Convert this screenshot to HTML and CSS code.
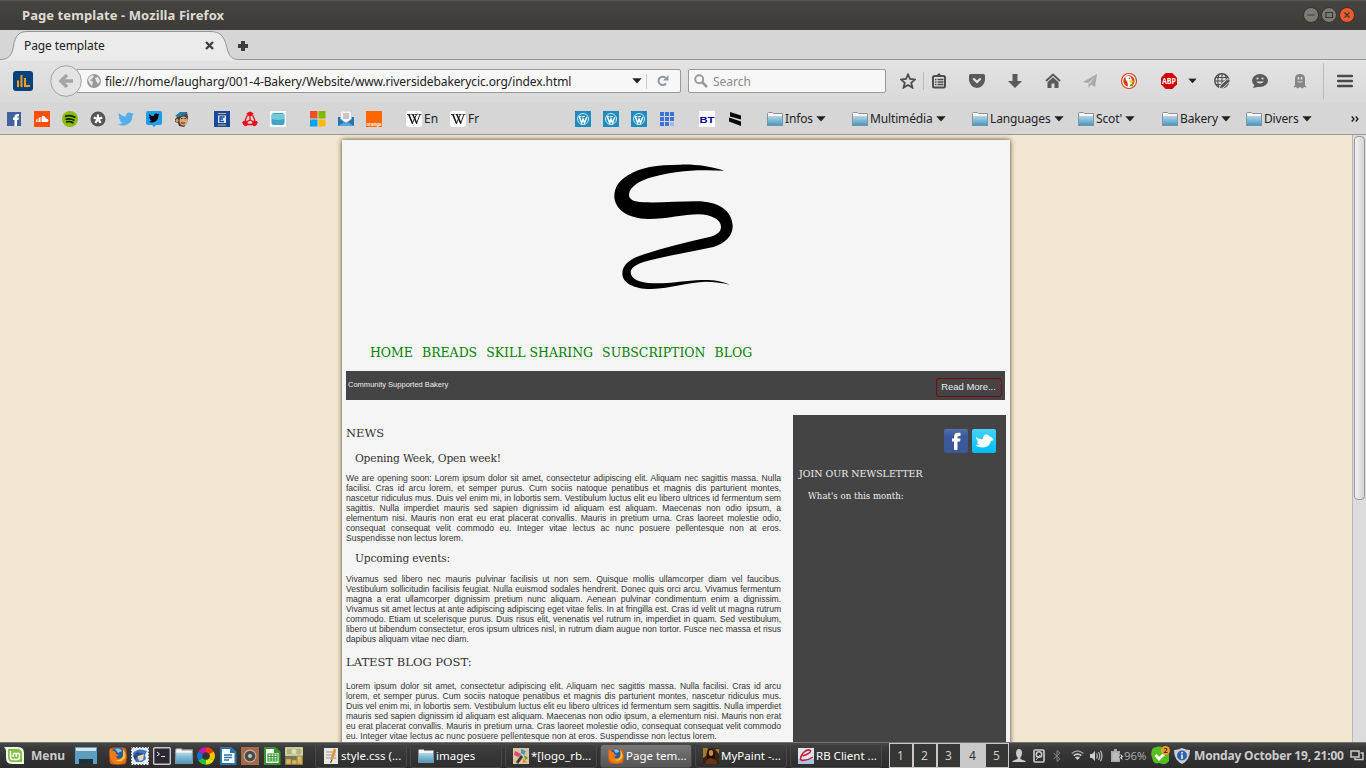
FILE: index.html
```html
<!DOCTYPE html>
<html lang="en">
<head>
<meta charset="utf-8">
<title>Page template</title>
<link rel="stylesheet" href="styles.css">
</head>
<body>
<svg class="defs" width="0" height="0">
  <defs>
    <linearGradient id="blue" x2="0" y2="1"><stop stop-color="#b5d6e5"/><stop offset="1" stop-color="#3f94bd"/></linearGradient>
    <linearGradient id="fbg" x2="0" y2="1"><stop stop-color="#5470ad"/><stop offset=".3" stop-color="#3b5998"/><stop offset="1" stop-color="#3b5998"/></linearGradient>
    <linearGradient id="twg" x2="0" y2="1"><stop stop-color="#44d2fc"/><stop offset="1" stop-color="#00bdfa"/></linearGradient>
    <symbol id="folder" viewBox="0 0 16 16"><path d="M.5 14.500V2.500Q.5 1.500 1.500 1.500H5.500L6.500 2.500H15.500V14.500Z" fill="#f5f5f5" stroke="#929292"/><path d="M0 5H16V15H0Z" fill="url(#blue)"/><path d="M.5 5V14.500H15.500V5" fill="none" stroke="#7895a3"/></symbol>
    <symbol id="caret" viewBox="0 0 10 6"><path d="M.3 .3H9.700L5 5.500Z" fill="#222"/></symbol>
    <symbol id="bird" viewBox="0 0 24 24"><path d="M24 4.600a10 10 0 0 1-2.800.8 5 5 0 0 0 2.200-2.700 10 10 0 0 1-3.100 1.200A4.900 4.900 0 0 0 11.900 8.300 14 14 0 0 1 1.700 3.100a4.900 4.900 0 0 0 1.500 6.600 5 5 0 0 1-2.200-.6 4.900 4.900 0 0 0 3.900 4.900 5 5 0 0 1-2.200.1 4.900 4.900 0 0 0 4.600 3.400A10 10 0 0 1 0 19.500 14 14 0 0 0 21.500 7a10 10 0 0 0 2.500-2.400Z"/></symbol>
    <symbol id="wp" viewBox="0 0 16 16"><path d="M0 0H16V16H0Z" fill="#1e8cbe"/><circle cx="8" cy="8" r="5.500" fill="none" stroke="#dcf0f8" stroke-width=".9"/><path d="M4.200 5.500L6.700 12L8 8L9.500 12L11.800 6" fill="none" stroke="#fff" stroke-width="1.500"/><path d="M3.800 5.500H6.500M7.200 5.500H10" stroke="#fff" stroke-width=".9"/></symbol>
    <symbol id="wiki" viewBox="0 0 16 16"><rect width="16" height="16" rx="3" fill="#fff"/><path d="M2.500 3.500L6.300 12.500L10.500 3.500M6.500 3.500L10.500 12.500L14 3.500" fill="none" stroke="#111" stroke-width=".9"/><path d="M3 3.500L6.700 12.500M7 3.500L11 12.500" stroke="#111" stroke-width="1.200"/><path d="M1 3.500H4.500M5.500 3.500H8.500M9 3.500H11.500M12.500 3.500H15.500" stroke="#111" stroke-width=".8"/></symbol>
    <symbol id="firefox" viewBox="0 0 18 18"><rect x=".5" y=".5" width="17" height="17" rx="4" fill="#d95b13"/><circle cx="9" cy="7" r="6.500" fill="#235c9f"/><path d="M6 2Q11 0 13 4L9 6Z" fill="#7dc2ea"/><path d="M1 1L4 4Q7 4 7 7L10 8L7 10Q8 13 13 11Q16 8 14 3Q19 7 17 12Q13 19 6 17Q-1 14 1 1Z" fill="#ef7b17"/><path d="M14 2Q18 8 15 12Q11 16 6 13Q12 14 14 9Z" fill="#fbc635"/></symbol>
    <symbol id="loaf" viewBox="0 0 18 18"><path d="M2 1H12L16.500 5V17H2Z" fill="#fff" stroke="currentColor" stroke-width="2"/><path d="M11 0L17 6H11Z" fill="currentColor"/></symbol>
  </defs>
</svg>

<header class="titlebar">
  <span class="titlebar-text">Page template - Mozilla Firefox</span>
  <svg class="winbtns" width="54" height="18" viewBox="0 0 54 18">
    <circle cx="9" cy="9" r="7.500" fill="#7b7a73" stroke="#34332f"/><circle cx="27" cy="9" r="7.500" fill="#7b7a73" stroke="#34332f"/><circle cx="45" cy="9" r="7.500" fill="#ee5a2e" stroke="#34332f"/>
    <path d="M5.500 9H12.500M24 6.500H30.500V11.500H24ZM42.500 6.500L47.500 11.500M47.500 6.500L42.500 11.500" fill="none" stroke="#3a3934" stroke-width="1.200"/>
  </svg>
</header>

<div class="tabstrip">
  <div class="tab">
    <svg class="tab-shape" width="238" height="30" viewBox="0 0 238 30"><path d="M0 29.500C9 29.500 12 25 13.500 16C15 6 19 1.500 27 1.500H210C220 1.500 224 6 226.500 16C228.500 25 231 29.500 238 29.500V30H0Z" fill="#ebebeb"/><path d="M0 29.500C9 29.500 12 25 13.500 16C15 6 19 1.500 27 1.500H210C220 1.500 224 6 226.500 16C228.500 25 231 29.500 238 29.500" fill="none" stroke="#8e959d"/></svg>
    <span class="tab-text">Page template</span>
    <svg class="tab-close" width="9" height="9" viewBox="0 0 9 9"><path d="M1 1L8 8M8 1L1 8" stroke="#3e3e3e" stroke-width="2.300"/></svg>
  </div>
  <svg class="tab-new" width="10" height="10" viewBox="0 0 10 10"><path d="M3 0H7V3H10V7H7V10H3V7H0V3H3Z" fill="#3d3d3d"/></svg>
</div>

<nav class="toolbar">
  <svg class="stats" width="20" height="20" viewBox="0 0 20 20"><rect width="20" height="20" rx="3" fill="#00437c"/><path d="M5 9.500V16M8.500 4V16M12 7V16M13 15H17" stroke="#ff9a1e" stroke-width="2"/></svg>
  <svg class="back" width="32" height="32" viewBox="0 0 32 32"><circle cx="16" cy="16" r="15.300" fill="#e3e3e3" stroke="#9da3a9"/><path d="M17 10L11 16L17 22M11.500 16H23" fill="none" stroke="#a5a5a5" stroke-width="3.600"/></svg>
  <div class="urlbar">
    <svg class="globe" width="14" height="14" viewBox="0 0 14 14"><circle cx="7" cy="7" r="7" fill="#999"/><path d="M2 3L5 1L7 2L5 5L3 6L6 8L5 12L3 10L1 6ZM8 4L11 3L13 7L11 10L9 7Z" fill="#e8e8e8"/></svg>
    <span class="url">file:///home/laugharg/001-4-Bakery/Website/www.riversidebakerycic.org/index.html</span>
    <svg class="urlcaret" width="10" height="6"><use href="#caret"/></svg>
    <i class="urlsep"></i>
    <svg class="reload" width="12" height="12" viewBox="0 0 12 12"><path d="M9 8.500A4.200 4.200 0 1 1 8.500 2.700" fill="none" stroke="#8c97a3" stroke-width="2"/><path d="M11.500 0V5.500H6Z" fill="#8c97a3"/></svg>
  </div>
  <div class="searchbar">
    <svg width="14" height="14" viewBox="0 0 14 14"><circle cx="5.200" cy="5.200" r="4" fill="none" stroke="#999" stroke-width="1.900"/><path d="M8 8L13 13" stroke="#999" stroke-width="2.500"/></svg>
    <span class="search-text">Search</span>
  </div>
  <svg class="t-star" width="16" height="16" viewBox="0 0 16 16"><path d="M8 1.500L10 6L15 6.500L11.200 9.800L12.400 14.600L8 12L3.600 14.600L4.800 9.800L1 6.500L6 6Z" fill="none" stroke="#4d4d4d" stroke-width="1.800"/></svg>
  <i class="sep sep-a"></i>
  <svg class="t-list" width="14" height="16" viewBox="0 0 14 16"><rect x="1" y="3" width="12" height="11.500" rx="1.500" fill="none" stroke="#4d4d4d" stroke-width="2"/><path d="M4 3L7 0L10 3Z" fill="#4d4d4d"/><path d="M3 6.500H4.500M5.500 6.500H11.500M3 9H4.500M5.500 9H11.500M3 11.500H4.500M5.500 11.500H11.500" stroke="#4d4d4d" stroke-width="1.400"/></svg>
  <svg class="t-pocket" width="16" height="16" viewBox="0 0 16 16"><path d="M1.500 1H14.500Q16 1 16 2.500V7Q15 14 8 15Q1 14 0 7V2.500Q0 1 1.500 1Z" fill="#5a5a5a"/><path d="M4.300 5.500L8 9L11.700 5.500" fill="none" stroke="#e6e6e6" stroke-width="2.200"/></svg>
  <svg class="t-down" width="14" height="16" viewBox="0 0 14 16"><path d="M4.500 1H9.500V8H14L7 15L0 8H4.500Z" fill="#5a5a5a"/></svg>
  <svg class="t-home" width="16" height="16" viewBox="0 0 16 16"><path d="M1 8L8 1.500L15 8" fill="none" stroke="#5a5a5a" stroke-width="2"/><path d="M2.500 9.300L8 4.300L13.500 9.300V15H9.500V10.500H6.500V15H2.500Z" fill="#5a5a5a"/></svg>
  <svg class="t-plane" width="14" height="15" viewBox="0 0 14 15"><path d="M14 0L12 13L8 10.500L5.500 14V9L0 8Z" fill="#a9a9a9"/><path d="M13 1.500L5.500 9L6.500 10Z" fill="#ddd"/></svg>
  <svg class="t-duck" width="16" height="16" viewBox="0 0 16 16"><circle cx="8" cy="8" r="8" fill="#dc3b14"/><circle cx="8" cy="8" r="6.300" fill="none" stroke="#fff" stroke-width="1.200"/><path d="M4 3.500L8 3Q11 4 11 8L11.500 13L7 14Q7 9 5 7Z" fill="#fff"/><path d="M8.500 7L14 8L9.500 10.500Z" fill="#f9c513"/><circle cx="8.500" cy="5.500" r=".8" fill="#2465a0"/><path d="M9 11.500L12 10.500V13.500L9 13Z" fill="#58a93b"/></svg>
  <svg class="t-abp" width="16" height="16" viewBox="0 0 16 16"><path d="M4.700 0H11.300L16 4.700V11.300L11.300 16H4.700L0 11.300V4.700Z" fill="#d10000"/><text x="8" y="11" text-anchor="middle" class="abp" textLength="14" lengthAdjust="spacingAndGlyphs">ABP</text></svg>
  <svg class="t-caret" width="9" height="6" viewBox="0 0 10 6"><use href="#caret" width="10" height="6"/></svg>
  <svg class="t-web" width="17" height="17" viewBox="0 0 17 17"><circle cx="7.800" cy="7.800" r="7" fill="none" stroke="#4d4d4d" stroke-width="1.400"/><path d="M8 1V15M1 8H15M2 4.500H14M2 11.500H11M5 1.500Q2.500 8 5 14M11 1.500Q13 5 12 9" fill="none" stroke="#4d4d4d" stroke-width="1.100"/><path d="M5 16L6.500 12L14 5.500L16.500 8L9 15Z" fill="#555" stroke="#dedede"/></svg>
  <svg class="t-chat" width="16" height="16" viewBox="0 0 16 16"><ellipse cx="8" cy="7.500" rx="8" ry="6.500" fill="#5a5a5a"/><path d="M3 11L1 15L8 13.500Z" fill="#5a5a5a"/><path d="M4 8.500Q8 12.500 12 8.500Z" fill="#ddd"/><circle cx="5.500" cy="5.500" r="1.100" fill="#ddd"/><circle cx="10.500" cy="5.500" r="1.100" fill="#ddd"/></svg>
  <svg class="t-ghost" width="14" height="16" viewBox="0 0 14 16"><path d="M2 12V6Q2 1 7 1Q12 1 12 6V12L13.500 14.500L11 14L9.500 15.500L7 14L4.500 15.500L3 14L.5 14.500Z" fill="#858588"/><path d="M5.500 4V6.500M8.500 4V6.500" stroke="#e4e4e4" stroke-width="1.500"/><path d="M4.500 8.300Q7 10.500 9.500 8.300" fill="none" stroke="#ddd"/></svg>
  <i class="sep sep-b"></i>
  <svg class="t-menu" width="16" height="14" viewBox="0 0 16 14"><path d="M1 2H15M1 7H15M1 12H15" stroke="#4a4a4a" stroke-width="2.500" stroke-linecap="round"/></svg>
</nav>

<nav class="bookmarks">
  <div class="cells first">
    <svg viewBox="0 0 16 16"><path d="M1 1H15V15H1Z" fill="#45619d"/><path d="M8.500 15V9H7V6.500H8.500Q8 2.500 13 3V5.200Q11 5 11 6.500H13L12.500 9H11V15Z" fill="#fff"/></svg>
    <svg viewBox="0 0 16 16"><path d="M0 0H16V16H0Z" fill="#ff4e0a"/><path d="M2.500 8.500V11M4 7.500V11M5.500 6.500V11M7 6V11" stroke="#fff"/><path d="M8 5Q11 4 12 7.500Q14.500 7.500 14.500 9.500Q14 11 13 11H8Z" fill="#fff"/></svg>
    <svg viewBox="0 0 16 16"><circle cx="8" cy="8" r="8" fill="#88bd00"/><path d="M3 5.500Q8 3.500 13.500 6.500M3.500 8.500Q8 7 12.500 9.500M4 11Q8 10 11.500 12" fill="none" stroke="#182100" stroke-width="1.700"/></svg>
    <svg viewBox="0 0 16 16"><circle cx="8" cy="8" r="7.500" fill="#555"/><path d="M8 3.500V8L12.300 6.600M8 8L10.700 11.800M8 8L5.300 11.800M8 8L3.700 6.600" fill="none" stroke="#fff" stroke-width="2.200"/></svg>
    <svg viewBox="0 0 24 24" class="bluebird"><use href="#bird"/></svg>
    <svg viewBox="0 0 16 16"><path d="M2 0H14Q16 0 16 2V12Q16 14 14 14H10L8 16L6 14H2Q0 14 0 12V2Q0 0 2 0Z" fill="#1c9eea"/><use href="#bird" x="2.500" y="1.500" width="11" height="11"/></svg>
    <svg viewBox="0 0 16 16"><path d="M3 6L6 2L13 1L14 6L13 12L10 16L5 15L4 12L1 11L1 8Z" fill="#573c2d"/><path d="M1 5L6 1L12 1L13 3L4 6Z" fill="#207db0"/><ellipse cx="9.500" cy="10" rx="4" ry="4.500" fill="#d9a67b"/><circle cx="3" cy="9.500" r="1.500" fill="#d9a67b"/><path d="M7 7.500H8.500M10.500 7.500H12M7 12H11" stroke="#333"/></svg>
  </div>
  <div class="cells group">
    <svg viewBox="0 0 16 16"><path d="M0 0H16V16H0Z" fill="#1a479a"/><path d="M4 2.500H12M4 14H12" stroke="#b7b77a"/><path d="M4 4.500H12V12H4Z" fill="#dce6f2"/><path d="M10.500 6H6V10.500H10M6 8H9" fill="none" stroke="#1a479a" stroke-width="1.300"/></svg>
    <svg viewBox="0 0 16 16" fill="none" stroke="#ea0f17"><path d="M5 2.500Q8 -.5 11 2.500L9.500 4.500H6.500ZM.7 11L4 9.500L6 13L4 15Q1 14.500 .7 11ZM15.300 11L12 9.500L10 13L12 15Q15 14.500 15.300 11Z" fill="#ea0f17"/><path d="M5.500 4L3 9.500M10.500 4L13 9.500M5 13.500H11" stroke-width="1.300"/><path d="M8 4V9L4 11M8 9L12 11" stroke-width="1.300"/></svg>
    <svg viewBox="0 0 16 16"><path d="M0 0H16V16H0Z" fill="#f5f9fb"/><rect x="1.500" y="2" width="13" height="12" rx="2.500" fill="#3ba6c6"/><path d="M2 3H14V8Q8 10 2 8Z" fill="#77c6db"/></svg>
  </div>
  <div class="cells group">
    <svg viewBox="0 0 16 16"><path d="M0 0H7.500V7.500H0Z" fill="#f25022"/><path d="M8.500 0H15.500V7.500H8.500Z" fill="#7fba00"/><path d="M0 8.500H7.500V15.500H0Z" fill="#00a4ef"/><path d="M8.500 8.500H15.500V15.500H8.500Z" fill="#ffb900"/></svg>
    <svg viewBox="0 0 16 16"><path d="M0 6H16V15H0Z" fill="#1f78b5"/><path d="M2.500 0H13.500V8L8 12L2.500 8Z" fill="#f4f4f4" stroke="#bbb" stroke-width=".6"/><path d="M5 3H11M5 5H11M5 7H11" stroke="#999"/><path d="M0 15L5.500 11.500H10.500L16 15Z" fill="#56a6d8"/></svg>
    <svg viewBox="0 0 16 16"><path d="M0 0H16V16H0Z" fill="#ff6600"/><text x="8" y="14.500" text-anchor="middle" class="orange">orange</text></svg>
  </div>
  <div class="links">
    <span class="link"><svg viewBox="0 0 16 16"><use href="#wiki"/></svg>En</span>
    <span class="link"><svg viewBox="0 0 16 16"><use href="#wiki"/></svg>Fr</span>
  </div>
  <div class="cells press">
    <svg viewBox="0 0 16 16"><use href="#wp"/></svg>
    <svg viewBox="0 0 16 16"><use href="#wp"/></svg>
    <svg viewBox="0 0 16 16"><use href="#wp"/></svg>
    <svg viewBox="0 0 16 16"><path d="M1 1H5V5H1ZM6 1H10V5H6ZM11 1H15V5H11ZM1 6H5V10H1ZM6 6H10V10H6ZM11 6H15V10H11ZM1 11H5V15H1ZM6 11H10V15H6Z" fill="#3b74d6"/><path d="M11 11H15V15H11Z" fill="#9bb9ee"/></svg>
  </div>
  <div class="cells group">
    <svg viewBox="0 0 16 16"><path d="M0 0H16V16H0Z" fill="#fff"/><text x="8" y="11.500" text-anchor="middle" class="bt" textLength="15" lengthAdjust="spacingAndGlyphs">BT</text></svg>
    <svg viewBox="0 0 16 16"><path d="M3 1L14 4.500V8.500L3 5.500ZM2 6.500L14 10.500V15L2 10.500Z" fill="#080808"/></svg>
  </div>
  <div class="folders">
    <span class="folder w85"><svg class="fi"><use href="#folder"/></svg><b class="ft">Infos</b><svg class="fc"><use href="#caret"/></svg></span>
    <span class="folder w120"><svg class="fi"><use href="#folder"/></svg><b class="ft">Multimédia</b><svg class="fc"><use href="#caret"/></svg></span>
    <span class="folder w106"><svg class="fi"><use href="#folder"/></svg><b class="ft">Languages</b><svg class="fc"><use href="#caret"/></svg></span>
    <span class="folder w84"><svg class="fi"><use href="#folder"/></svg><b class="ft">Scot'</b><svg class="fc"><use href="#caret"/></svg></span>
    <span class="folder w84"><svg class="fi"><use href="#folder"/></svg><b class="ft">Bakery</b><svg class="fc"><use href="#caret"/></svg></span>
    <span class="folder w84"><svg class="fi"><use href="#folder"/></svg><b class="ft">Divers</b><svg class="fc"><use href="#caret"/></svg></span>
  </div>
  <svg class="more" viewBox="0 0 8 6"><path d="M.7 .5L3 3L.7 5.500M4.700 .5L7 3L4.700 5.500" fill="none" stroke="#111" stroke-width="1.200"/></svg>
</nav>

<div class="viewport">
  <div class="canvas">
    <div class="page">
      <svg class="logo" width="170" height="170" viewBox="0 0 510 510"><path d="M403 92C360 78 310 72 270 74C200 74 150 82 115 105C85 122 72 145 73 172C75 205 110 237 175 237C235 237 280 223 325 223C365 223 393 240 393 260C393 275 382 285 355 292C290 307 225 322 165 342C120 355 96 375 97 402C98 430 135 448 185 447C240 445 300 426 345 425C375 425 400 429 419 434C395 422 365 419 335 420C290 421 240 431 190 430C145 429 122 415 122 397C122 380 150 368 180 361C245 344 310 334 370 321C405 311 429 287 428 257C426 212 385 184 320 184C265 184 210 189 160 187C130 186 116 178 117 163C119 140 150 122 185 112C235 97 300 90 350 91Z"/></svg>
      <ul class="menu"><li>HOME</li><li>BREADS</li><li>SKILL SHARING</li><li>SUBSCRIPTION</li><li>BLOG</li></ul>
      <div class="banner"><span class="banner-text">Community Supported Bakery</span><span class="readmore">Read More...</span></div>
      <div class="columns">
        <main class="main">
          <h1 class="h-news">NEWS</h1>
          <h2 class="h-open">Opening Week, Open week!</h2>
          <p class="para">
            <span>We are opening soon: Lorem ipsum dolor sit amet, consectetur adipiscing elit. Aliquam nec sagittis massa. Nulla</span>
            <span>facilisi. Cras id arcu lorem, et semper purus. Cum sociis natoque penatibus et magnis dis parturient montes,</span>
            <span>nascetur ridiculus mus. Duis vel enim mi, in lobortis sem. Vestibulum luctus elit eu libero ultrices id fermentum sem</span>
            <span>sagittis. Nulla imperdiet mauris sed sapien dignissim id aliquam est aliquam. Maecenas non odio ipsum, a</span>
            <span>elementum nisi. Mauris non erat eu erat placerat convallis. Mauris in pretium urna. Cras laoreet molestie odio,</span>
            <span>consequat consequat velit commodo eu. Integer vitae lectus ac nunc posuere pellentesque non at eros.</span>
            <span>Suspendisse non lectus lorem.</span>
          </p>
          <h2 class="h-events">Upcoming events:</h2>
          <p class="para">
            <span>Vivamus sed libero nec mauris pulvinar facilisis ut non sem. Quisque mollis ullamcorper diam vel faucibus.</span>
            <span>Vestibulum sollicitudin facilisis feugiat. Nulla euismod sodales hendrerit. Donec quis orci arcu. Vivamus fermentum</span>
            <span>magna a erat ullamcorper dignissim pretium nunc aliquam. Aenean pulvinar condimentum enim a dignissim.</span>
            <span>Vivamus sit amet lectus at ante adipiscing adipiscing eget vitae felis. In at fringilla est. Cras id velit ut magna rutrum</span>
            <span>commodo. Etiam ut scelerisque purus. Duis risus elit, venenatis vel rutrum in, imperdiet in quam. Sed vestibulum,</span>
            <span>libero ut bibendum consectetur, eros ipsum ultrices nisl, in rutrum diam augue non tortor. Fusce nec massa et risus</span>
            <span>dapibus aliquam vitae nec diam.</span>
          </p>
          <h1 class="h-blog">LATEST BLOG POST:</h1>
          <p class="para">
            <span>Lorem ipsum dolor sit amet, consectetur adipiscing elit. Aliquam nec sagittis massa. Nulla facilisi. Cras id arcu</span>
            <span>lorem, et semper purus. Cum sociis natoque penatibus et magnis dis parturient montes, nascetur ridiculus mus.</span>
            <span>Duis vel enim mi, in lobortis sem. Vestibulum luctus elit eu libero ultrices id fermentum sem sagittis. Nulla imperdiet</span>
            <span>mauris sed sapien dignissim id aliquam est aliquam. Maecenas non odio ipsum, a elementum nisi. Mauris non erat</span>
            <span>eu erat placerat convallis. Mauris in pretium urna. Cras laoreet molestie odio, consequat consequat velit commodo</span>
            <span>eu. Integer vitae lectus ac nunc posuere pellentesque non at eros. Suspendisse non lectus lorem.</span>
          </p>
        </main>
        <aside class="side">
          <div class="social">
            <svg width="24" height="24" viewBox="0 0 24 24"><rect width="24" height="24" rx="2" fill="url(#fbg)"/><path d="M10 21V12.500H8V9.500H10V8Q10 3.700 14 3.700H16.500V7H15Q13.500 7 13.500 8.500V9.500H16.500L16 12.500H13.500V21Z" fill="#fff"/></svg>
            <svg width="24" height="24" viewBox="0 0 24 24"><rect width="24" height="24" rx="2" fill="url(#twg)"/><path d="M4 8Q8 11 11 10Q11 5 15 5.500Q17 6 18 7.500L20.500 9L21.500 11L19 12Q17 18.500 11 18.500Q6 18.500 3.500 16L7.500 15.500Q5 14.500 5 13L6.500 12.500Q4 11 4 8Z" fill="#fff"/></svg>
          </div>
          <h3 class="h-join">JOIN OUR NEWSLETTER</h3>
          <h4 class="h-month">What's on this month:</h4>
        </aside>
      </div>
    </div>
  </div>
  <div class="scroll"><div class="thumb"></div></div>
</div>

<footer class="panel">
  <svg class="mint" width="20" height="19" viewBox="0 0 20 19"><path d="M0 1H14Q20 1 20 7V18H8Q2 18 2 12V5Q2 3 0 1Z" fill="#eef6e7"/><path d="M4 3H13Q18 3 18 8V16H9Q4 16 4 11Z" fill="#86be43"/><path d="M6.500 5V11Q6.500 13.500 9 13.500H13Q15.500 13.500 15.500 11V9Q15.500 7.300 13.800 7.300Q12.300 7.300 12.300 9V11M12.300 9Q12.300 7.300 10.800 7.300Q9.300 7.300 9.300 9V11" fill="none" stroke="#fff" stroke-width="1.500"/></svg>
  <span class="menu-label">Menu</span>
  <svg class="desk" width="22" height="18" viewBox="0 0 22 18"><path d="M0 0H22V17H0Z" fill="#5c9dc0"/><path d="M1 1H21V4H1Z" fill="#d4e4eb"/><path d="M4 12H18V17H4Z" fill="#20303a"/></svg>
  <div class="launch">
    <svg viewBox="0 0 18 18"><use href="#firefox"/></svg>
    <svg viewBox="0 0 18 18"><path d="M0 0H18V18H0Z" fill="#e7edf3"/><path d="M.5 .5H17.500V17.500H.5Z" fill="none" stroke="#555" stroke-dasharray="1.500 1.500"/><path d="M2 6Q7 0 16 4L14 8L15 12L11 15H5L3 11Z" fill="#3c76bc"/><path d="M6 8L13 7L12 13L8 14Z" fill="#e9d2b7"/><path d="M2 9L6 5L13 7L7 9L4 13Z" fill="#244d88"/></svg>
    <svg viewBox="0 0 18 18"><rect x=".7" y=".7" width="16.600" height="16.600" rx="1" fill="#2c2935" stroke="#c6c6c6" stroke-width="1.400"/><path d="M4 5L6.500 7L4 9M8 9.500H12" fill="none" stroke="#eee"/></svg>
    <svg viewBox="0 0 16 16"><use href="#folder"/></svg>
    <svg viewBox="0 0 18 18" fill="none" stroke-width="5"><path d="M9 2.700A6.300 6.300 0 0 1 14.500 5.800" stroke="#ff3d00"/><path d="M14.500 5.800A6.300 6.300 0 0 1 14.500 12.200" stroke="#ffc400"/><path d="M14.500 12.200A6.300 6.300 0 0 1 9 15.300" stroke="#d7e600"/><path d="M9 15.300A6.300 6.300 0 0 1 3.500 12.200" stroke="#26bf3f"/><path d="M3.500 12.200A6.300 6.300 0 0 1 3.500 5.800" stroke="#0875d9"/><path d="M3.500 5.800A6.300 6.300 0 0 1 9 2.700" stroke="#cc17af"/></svg>
    <svg viewBox="0 0 18 18" class="writer"><use href="#loaf"/><path d="M5 8H13M5 10.500H13M5 13H10" stroke="#2c75ab" stroke-width="1.500"/></svg>
    <svg viewBox="0 0 18 18"><path d="M0 0H18V18H0Z" fill="#a76843"/><circle cx="9" cy="9" r="6.500" fill="#bdb5ae"/><circle cx="9" cy="9" r="5.300" fill="#4d4b49"/><circle cx="9" cy="9" r="2" fill="#c7c5c2"/></svg>
    <svg viewBox="0 0 18 18" class="calc"><use href="#loaf"/><path d="M5 7H14V14H5ZM5 9.500H14M5 12H14M8 7V14M11 7V14" fill="none" stroke="#35962c" stroke-width="1.200"/></svg>
    <svg viewBox="0 0 18 18"><path d="M0 0H18V9H0Z" fill="#aeb583"/><path d="M1 1H17V8H1Z" fill="none" stroke="#e6e6ba"/><circle cx="9" cy="4.500" r="2.500" fill="#e4e1b1"/><path d="M0 9H18V18H0Z" fill="#77745a"/><path d="M1 12H6V17H1ZM7 13H12V17H7ZM12 9H17V17H12Z" fill="#d8bb61" stroke="#a78b3c" stroke-width=".7"/></svg>
  </div>
  <div class="tasks">
    <span class="task"><svg viewBox="0 0 16 16"><path d="M1 0H15V16H1Z" fill="#e6e6e2"/><path d="M3 4H13M3 7H13M3 10H13" stroke="#9e9e9e"/><path d="M12 1L8.500 12" stroke="#ea942c" stroke-width="2.500"/><path d="M8.800 12L7.500 15" stroke="#333"/></svg>style.css (...</span>
    <span class="task"><svg viewBox="0 0 16 16"><use href="#folder"/></svg>images</span>
    <span class="task"><svg viewBox="0 0 16 16"><path d="M0 0H16V16H0Z" fill="#dcc59d"/><path d="M2 3L8 6L6 9L1 7Z" fill="#d6487a"/><path d="M8 1L13 3L11 7L8 5Z" fill="#3d9bd1"/><path d="M11 7L15 10L12 12Z" fill="#4ea53c"/><path d="M3 14L8 7L10 9L5 16Z" fill="#3c3835"/><path d="M10 11L14 14L10 15Z" fill="#ef8125"/></svg>*[logo_rb...</span>
    <span class="task active"><svg viewBox="0 0 18 18"><use href="#firefox"/></svg>Page tem...</span>
    <span class="task"><svg viewBox="0 0 16 16"><path d="M0 0H16V16H0Z" fill="#3a2410"/><path d="M0 0H5L3 8L0 10ZM12 1H16V6Z" fill="#a37b2b"/><path d="M4 12V4Q8 -1 12 4V12Z" fill="#1e0f07"/><ellipse cx="8" cy="5" rx="2.200" ry="3" fill="#c98c48"/><path d="M2 16Q3 10 8 10Q14 11 14 16Z" fill="#6a3517"/></svg>MyPaint -...</span>
    <span class="task"><svg viewBox="0 0 16 16"><path d="M0 0H16V16H0Z" fill="#dce6f3"/><path d="M0 11H16V16H0Z" fill="#a9c3e3"/><path d="M4.500 8Q13.500 5 12.500 2.500Q9.500 .5 5 5Q0 12 5 12.500Q10 12.500 15 9" fill="none" stroke="#cf1b2e" stroke-width="1.500"/></svg>RB Client ...</span>
  </div>
  <div class="spaces"><span>1</span><span>2</span><span>3</span><span class="on">4</span><span>5</span></div>
  <div class="tray">
    <svg class="y-user" width="14" height="14" viewBox="0 0 14 14"><path d="M4 4Q4 0 7 0Q10 0 10 4Q10 7 8.500 8V10L13.500 12V13H.5V12L5.500 10V8Q4 7 4 4Z" fill="#ccc"/></svg>
    <svg class="y-disk" width="12" height="14" viewBox="0 0 12 14"><rect x="1" y="1" width="10" height="12" rx="1" fill="none" stroke="#ccc" stroke-width="1.600"/><circle cx="6" cy="5.500" r="2.700" fill="none" stroke="#ccc" stroke-width="1.600"/><path d="M3 11L7 6" stroke="#ccc"/></svg>
    <svg class="y-bt" width="8" height="12" viewBox="0 0 8 12"><path d="M.5 3L7 9L4 11.500V.5L7 3L.5 9" fill="none" stroke="#868686"/></svg>
    <svg class="y-wifi" width="13" height="11" viewBox="0 0 13 11" fill="none"><path d="M.7 3.500Q6.500 -1.500 12.300 3.500" stroke="#999" stroke-width="1.600"/><path d="M2.700 5.700Q6.500 2.500 10.300 5.700" stroke="#ccc" stroke-width="1.600"/><path d="M4 7.500Q6.500 5.500 9 7.500L6.500 10Z" fill="#ccc"/></svg>
    <svg class="y-vol" width="13" height="12" viewBox="0 0 13 12"><path d="M0 4H2L5 1V11L2 8H0Z" fill="#ccc"/><path d="M6.500 3.500Q8 6 6.500 8.500M8.500 2Q11 6 8.500 10M10.500 .8Q13.500 6 10.500 11.200" fill="none" stroke="#bbb" stroke-width="1.200"/></svg>
    <svg class="y-bat" width="13" height="14" viewBox="0 0 13 14"><path d="M0 2H3V0H6V2H9V13H0Z" fill="#aaa"/><path d="M1.500 3.500H7.500V11.500H1.500Z" fill="#bdbdbd"/><path d="M9 4L13 8H11L12 12L8 8H10Z" fill="#eee" stroke="#333" stroke-width=".6"/></svg>
    <span class="pct">96%</span>
    <svg class="y-skype" width="20" height="19" viewBox="0 0 20 19"><path d="M2 2Q8 -1 14 2L18 5V15Q15 20 8 17Q2 19 1 11Q-1 6 2 2Z" fill="#55bf1f"/><path d="M4.500 9L8 13L14 7" fill="none" stroke="#fff" stroke-width="2.800"/><circle cx="14.500" cy="4.500" r="4.500" fill="#f59b21"/><text x="14.500" y="7.300" text-anchor="middle" class="badge">2</text></svg>
    <svg class="y-shield" width="16" height="16" viewBox="0 0 16 16"><path d="M8 0Q12 2 16 2Q16 12 8 16Q0 12 0 2Q4 2 8 0Z" fill="#c9d0d8"/><circle cx="8" cy="7.500" r="5" fill="#2d63ad"/><path d="M8 4V5.500M8 6.500V11" stroke="#fff" stroke-width="1.500"/></svg>
    <span class="clock">Monday October 19, 21:00</span>
    <svg class="y-win" width="14" height="11" viewBox="0 0 14 11"><path d="M1 1H9V7H1ZM10.500 3H13V9.500H5V8" fill="none" stroke="#ccc" stroke-width="1.500"/></svg>
  </div>
</footer>
</body>
</html>
```
FILE: styles.css
```css
* { box-sizing: border-box; }
body { margin: 0; width: 1366px; height: 768px; overflow: hidden; display: flex; flex-direction: column; font-family: "Noto Sans", sans-serif; font-size: 12px; color: #222; background: #d6d6d6; }
svg { display: block; flex: none; }
.defs { position: absolute; }

.titlebar { height: 30px; flex: none; display: flex; justify-content: space-between; align-items: center; padding: 0 10px 0 22px; background: linear-gradient(#5a5954 0, #454440 2px, #3c3b37 100%); }
.titlebar-text { font-weight: bold; font-size: 13px; letter-spacing: .08px; color: #dfdbd2; white-space: nowrap; }

.tabstrip { height: 30px; flex: none; display: flex; align-items: center; background: linear-gradient(#8e959d, #8e959d) 238px 29px / 100% 1px no-repeat, #d6d6d6; }
.tab { position: relative; width: 238px; height: 30px; display: flex; align-items: center; padding-left: 24px; }
.tab-shape { position: absolute; left: 0; top: 0; }
.tab-text { position: relative; width: 181px; font-size: 12px; letter-spacing: -.1px; }
.tab-close { position: relative; margin-top: 1px; }
.tab-new { margin-top: 1px; }

.toolbar { height: 43px; flex: none; display: flex; align-items: center; padding-bottom: 1px; background: linear-gradient(#ebebeb 0, #e2e2e2 1px, #d9d9d9 100%); }
.stats { margin-left: 13px; }
.back { margin-left: 17px; position: relative; z-index: 1; }
.urlbar { width: 605px; height: 24px; margin-left: -6px; display: flex; align-items: center; border: 1px solid #999; border-radius: 2px; background: #f7f7f7; padding-left: 10px; }
.url { width: 527px; margin-left: 4px; font-size: 12px; letter-spacing: -.1px; white-space: nowrap; }
.urlsep { width: 1px; height: 15px; margin-left: 4px; background: #ccc; }
.reload { margin-left: 10px; }
.searchbar { width: 198px; height: 24px; margin-left: 7px; display: flex; align-items: center; gap: 5px; padding-left: 5px; border: 1px solid #999; border-radius: 2px; background: #f7f7f7; }
.search-text { color: #8b8b8b; }
.sep { width: 1px; background: #bbb; }
.sep-a { height: 18px; margin: 0 8px 0 7px; }
.sep-b { height: 36px; margin: 0 13px 0 16px; }
.t-star { margin-left: 14px; }
.t-pocket { margin-left: 23px; }
.t-down { margin-left: 23px; }
.t-home { margin-left: 23px; }
.t-plane { margin-left: 22px; }
.t-duck { margin-left: 24px; }
.t-abp { margin-left: 24px; overflow: visible; }
.t-caret { margin-left: 11px; }
.t-web { margin-left: 17px; }
.t-chat { margin-left: 21px; }
.t-ghost { margin-left: 25px; }
.abp { font: bold 8.500px "Open Sans", sans-serif; fill: #fff; }

.bookmarks { height: 32px; flex: none; display: flex; align-items: center; border-bottom: 1px solid #999; background: #d6d6d6; }
.cells { display: flex; }
.cells svg { width: 16px; height: 16px; margin: 0 6px; }
.group { margin-left: 12px; }
.bluebird { fill: #55acee; }
.links { display: flex; margin-left: 18px; }
.link { width: 44px; display: flex; align-items: center; gap: 2px; }
.link svg { width: 16px; height: 16px; }
.press { margin-left: 75px; }
.folders { display: flex; margin-left: 18px; }
.folder { display: flex; align-items: center; }
.fi { width: 16px; height: 16px; margin-right: 2px; }
.ft { font-weight: normal; letter-spacing: -.15px; }
.fc { width: 10px; height: 6px; margin-left: 3px; }
.w85 { width: 85px; }
.w120 { width: 120px; }
.w106 { width: 106px; }
.w84 { width: 84px; }
.more { width: 8px; height: 6px; margin-left: 21px; }
.orange { font: bold 4.500px "Liberation Sans", sans-serif; fill: #fff; }
.bt { font: bold 9px "Liberation Sans", sans-serif; fill: #00009b; }

.viewport { height: 607px; flex: none; display: flex; }
.canvas { width: 1352px; padding: 5px 0 0 342px; background: #f2e7d1; overflow: hidden; }
.page { width: 668px; height: 620px; background: #f5f5f5; box-shadow: 0 0 5px #4d3f2c; font-family: "DejaVu Serif", serif; color: #333; }
.logo { margin-left: 248px; }
.menu { list-style: none; margin: 34px 0 0 28px; padding: 0; display: flex; gap: 9px; height: 18px; line-height: 18px; font-size: 12.470px; color: #008000; white-space: nowrap; }
.banner { width: 659px; height: 29px; margin: 9px 0 0 4px; padding: 0 3px 0 2px; display: flex; justify-content: space-between; background: #444; font-family: "Liberation Sans", sans-serif; }
.banner-text { font-size: 7.520px; line-height: 27px; color: #eee; }
.readmore { width: 66px; height: 19px; margin-top: 7px; border: 1px solid #800000; border-radius: 3px; font-size: 9.450px; line-height: 16px; padding-right: 1px; text-align: center; color: #eee; }
.columns { display: flex; margin: 15px 0 0 4px; }
.main { width: 436px; margin-right: 11px; }
h1, h2, h3, h4 { margin: 0; font-weight: normal; white-space: nowrap; }
.h-news { font-size: 11.500px; line-height: 16px; margin-top: 10px; }
.h-open { font-size: 10.700px; letter-spacing: -.18px; line-height: 16px; margin: 10px 0 6px 9px; }
.h-events { font-size: 10.700px; letter-spacing: -.18px; line-height: 16px; margin: 8px 0 7px 9px; }
.h-blog { font-size: 11.550px; line-height: 16px; margin: 10px 0 11px; }
.para { width: 435px; margin: 0; font: 8.600px/10px "Liberation Sans", sans-serif; letter-spacing: -.04px; }
.para span { display: block; height: 10px; text-align: justify; text-align-last: justify; }
.para span:last-child { text-align-last: left; letter-spacing: 0; }
.side { width: 213px; height: 340px; background: #444; color: #eee; }
.social { display: flex; justify-content: flex-end; gap: 4px; padding: 14px 10px 0 0; }
.h-join { font-size: 9.450px; line-height: 14px; margin: 14px 0 0 6px; }
.h-month { font-size: 8.620px; line-height: 14px; margin: 8px 0 0 15px; }
.scroll { width: 14px; background: #dcdcdc; border-left: 1px solid #b8b8b8; padding: 1px 1px; }
.thumb { width: 11px; height: 364px; border: 1px solid #999; border-radius: 4px; background: linear-gradient(90deg, #f2f2f2, #d4d4d4); }

.panel { height: 26px; flex: none; display: flex; align-items: center; background: linear-gradient(#484848, #393939 20%, #2c2c2c); border-top: 1px solid #747474; color: #ddd; }
.mint { margin-left: 4px; }
.menu-label { width: 44px; margin-left: 7px; font-weight: bold; font-size: 12px; color: #ccc; }
.launch { display: flex; gap: 4px; margin-left: 12px; }
.launch svg { width: 18px; height: 18px; }
.writer { color: #2c75ab; }
.calc { color: #35962c; }
.tasks { display: flex; gap: 3px; margin-left: 12px; }
.task { width: 92px; height: 24px; display: flex; align-items: center; gap: 2px; padding-left: 7px; border: 1px solid #474747; border-radius: 3px; background: linear-gradient(#3f3f3f, #2e2e2e); font-size: 11.500px; color: #fff; white-space: nowrap; }
.task svg { width: 16px; height: 16px; }
.active { background: linear-gradient(#777, #555); }
.spaces { display: flex; margin-left: 7px; gap: 2px; padding: 1px; background: #c8c8c8; }
.spaces span { width: 22px; height: 23px; line-height: 23px; padding-right: 1px; text-align: center; background: #363634; color: #ccc; }
.spaces .on { background: #c8c8c8; color: #333; }
.tray { display: flex; align-items: center; margin-left: 3px; }
.y-disk { margin-left: 7px; }
.y-bt { margin-left: 8px; }
.y-wifi { margin-left: 10px; }
.y-vol { margin-left: 6px; }
.y-bat { margin-left: 8px; }
.pct { width: 26px; font-size: 11.300px; color: #aaa; white-space: nowrap; }
.y-skype { margin-left: 1px; }
.y-shield { margin-left: 3px; }
.clock { width: 156px; margin-left: 4px; font-weight: bold; font-size: 12px; letter-spacing: -.18px; color: #ccc; white-space: nowrap; }
.badge { font: bold 7px "Noto Sans", sans-serif; fill: #333; }
```
